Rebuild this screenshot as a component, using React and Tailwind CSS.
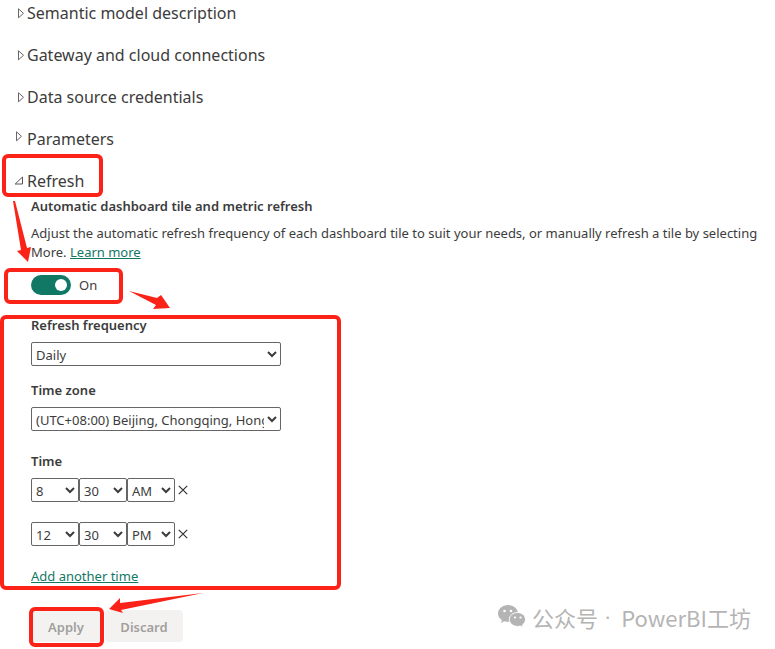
import { useState } from 'react'

const collapsedSections = [
  'Semantic model description',
  'Gateway and cloud connections',
  'Data source credentials',
]

const hours = ['1', '2', '3', '4', '5', '6', '7', '8', '9', '10', '11', '12']

function SectionHeader({ title, open = false, raised = false }) {
  return (
    <button
      type="button"
      aria-expanded={open}
      className="flex h-[26px] w-full items-center text-left text-base text-[#3c3c3c]"
    >
      <span className={`flex w-[27px] shrink-0 ${raised ? 'pb-1.5 pl-[15px]' : open ? 'pb-0.5 pl-3.5' : 'pl-[17px]'}`}>
        {open ? (
          <svg width="9" height="9" viewBox="0 0 9 9" fill="none" stroke="#555" aria-hidden="true">
            <path d="M8.500 1v7H1.200z" />
          </svg>
        ) : (
          <svg width="8" height="11" viewBox="0 0 8 11" fill="none" stroke="#666" aria-hidden="true">
            <path d="M1.500.8v9L6.500 5.300z" />
          </svg>
        )}
      </span>
      {title}
    </button>
  )
}

function Select({ id, label, value, options, className }) {
  return (
    <select
      id={id}
      aria-label={label}
      defaultValue={value}
      className={`h-6 rounded-[2px] border border-[#666] bg-white pt-0.5 text-[13px] text-[#3c3c3c] ${className}`}
    >
      {options.map((option) => (
        <option key={option}>{option}</option>
      ))}
    </select>
  )
}

function TimeRow({ hour, minute, period }) {
  return (
    <div className="flex items-center">
      <Select label="Hour" value={hour} options={hours} className="w-12" />
      <Select label="Minute" value={minute} options={['00', '30']} className="w-12" />
      <Select label="AM or PM" value={period} options={['AM', 'PM']} className="w-12" />
      <button type="button" aria-label="Remove time" className="flex size-4 items-center justify-center">
        <svg width="10" height="10" viewBox="0 0 10 10" stroke="#333" strokeWidth="1.200" aria-hidden="true">
          <path d="M.8.8l8.400 8.400M9.200.8L.8 9.200" />
        </svg>
      </button>
    </div>
  )
}

function Toggle() {
  const [on, setOn] = useState(true)

  return (
    <label className="flex h-5 items-center gap-2">
      <input
        type="checkbox"
        role="switch"
        checked={on}
        onChange={() => setOn(!on)}
        className="peer sr-only"
      />
      <span className="flex h-5 w-10 items-center rounded-full bg-gray-400 px-1 peer-checked:justify-end peer-checked:bg-[#117865]">
        <span className="size-3 rounded-full bg-white" />
      </span>
      {on ? 'On' : 'Off'}
    </label>
  )
}

// Red boxes and arrows drawn over the settings to show the order of the steps.
function Annotations() {
  return (
    <div className="pointer-events-none absolute inset-0" aria-hidden="true">
      <div className="absolute top-[154px] left-[2px] h-[43px] w-[101px] rounded-md border-4 border-[#fb2318]" />
      <div className="absolute top-[268px] left-[4px] h-[36px] w-[119px] rounded-md border-4 border-[#fb2318]" />
      <div className="absolute top-[315px] left-0 h-[275px] w-[341px] rounded-md border-4 border-[#fb2318]" />
      <div className="absolute top-[607px] left-[29px] h-[40px] w-[75px] rounded-md border-4 border-[#fb2318]" />
      <svg className="absolute top-0 left-0" width="220" height="649" fill="#fb2318">
        <path d="M13 201h2l12 47 4-1-3 15-11-11 4-1z" />
        <path d="M129 291l28 7 4-3 9 13-17 1 3-4z" />
        <path d="M203 593l-82 17 2 3-14-4 11-11v5z" />
      </svg>
    </div>
  )
}

function Watermark() {
  return (
    <div className="flex items-center gap-1.5 font-['Noto_Sans_CJK_SC',sans-serif] text-[22px] leading-[30px] text-[#b4b4b4]">
      <svg width="28" height="24" viewBox="0 0 28 24" aria-hidden="true">
        <path
          fill="#b4b4b4"
          d="M10 0C4.500 0 0 3.700 0 8.500c0 2.700 1.500 5 3.800 6.600L3 18l3.300-1.700c1.200.4 2.400.5 3.700.5 5.500 0 10-3.700 10-8.300S15.500 0 10 0z"
        />
        <path
          fill="#b4b4b4"
          stroke="white"
          d="M19.500 7.500c4.600 0 8 3.200 8 7 0 2.200-1.200 4.100-3 5.400l.7 2.600-3-1.500c-.8.2-1.700.4-2.700.4-4.600 0-8.200-3.100-8.200-6.900s3.600-7 8.200-7z"
        />
        <g fill="white">
          <circle cx="6.500" cy="6" r="1.300" />
          <circle cx="13" cy="6" r="1.300" />
          <circle cx="17" cy="12.500" r="1.100" />
          <circle cx="22.500" cy="12.500" r="1.100" />
        </g>
      </svg>
      <span className="flex">
        <span>公众号</span>
        <span className="pr-2.5 pl-1.5 font-['Liberation_Sans',sans-serif]">·</span>
        <span>PowerBI工坊</span>
      </span>
    </div>
  )
}

export default function App() {
  return (
    <main className="relative bg-white pb-1.5 font-['Noto_Sans','Open_Sans',sans-serif] text-[#333]">
      <div className="flex flex-col gap-4">
        {collapsedSections.map((title) => (
          <SectionHeader key={title} title={title} />
        ))}
        <SectionHeader title="Parameters" raised />
        <SectionHeader title="Refresh" open />
      </div>

      <div className="flex flex-col items-start pt-0.5 pl-[31px] text-[13px] leading-5 text-[#3c3c3c]">
        <h2 className="font-semibold">Automatic dashboard tile and metric refresh</h2>
        <p className="mt-2 mb-[13px] pr-2 leading-[19px]">
          Adjust the automatic refresh frequency of each dashboard tile to suit your needs, or manually refresh a tile by
          selecting More.{' '}
          <a href="#learn-more" className="text-[#117865] underline">
            Learn more
          </a>
        </p>
        <Toggle />

        <label htmlFor="frequency" className="mt-5 mb-[7px] font-semibold">
          Refresh frequency
        </label>
        <Select id="frequency" value="Daily" options={['Daily', 'Weekly']} className="w-[250px]" />

        <label htmlFor="zone" className="mt-3.5 mb-[7px] font-semibold">
          Time zone
        </label>
        <Select
          id="zone"
          value="(UTC+08:00) Beijing, Chongqing, Hong Kong, Urumqi"
          options={['(UTC+08:00) Beijing, Chongqing, Hong Kong, Urumqi']}
          className="w-[250px]"
        />

        <h3 className="mt-5 mb-[7px] font-semibold">Time</h3>
        <div className="flex flex-col gap-5">
          <TimeRow hour="8" minute="30" period="AM" />
          <TimeRow hour="12" minute="30" period="PM" />
        </div>
        <a href="#add-time" className="mt-5 text-[#117865] underline">
          Add another time
        </a>
      </div>

      <div className="flex items-start justify-between pt-4 pr-6 pl-[31px]">
        <div className="flex gap-1 pt-2 text-[13px] font-semibold text-[#a19f9d]">
          <button type="button" disabled className="h-8 w-[70px] rounded-sm bg-[#f3f2f1] pt-1">
            Apply
          </button>
          <button type="button" disabled className="h-8 w-[78px] rounded-sm bg-[#f3f2f1] pt-1">
            Discard
          </button>
        </div>
        <Watermark />
      </div>

      <Annotations />
    </main>
  )
}
